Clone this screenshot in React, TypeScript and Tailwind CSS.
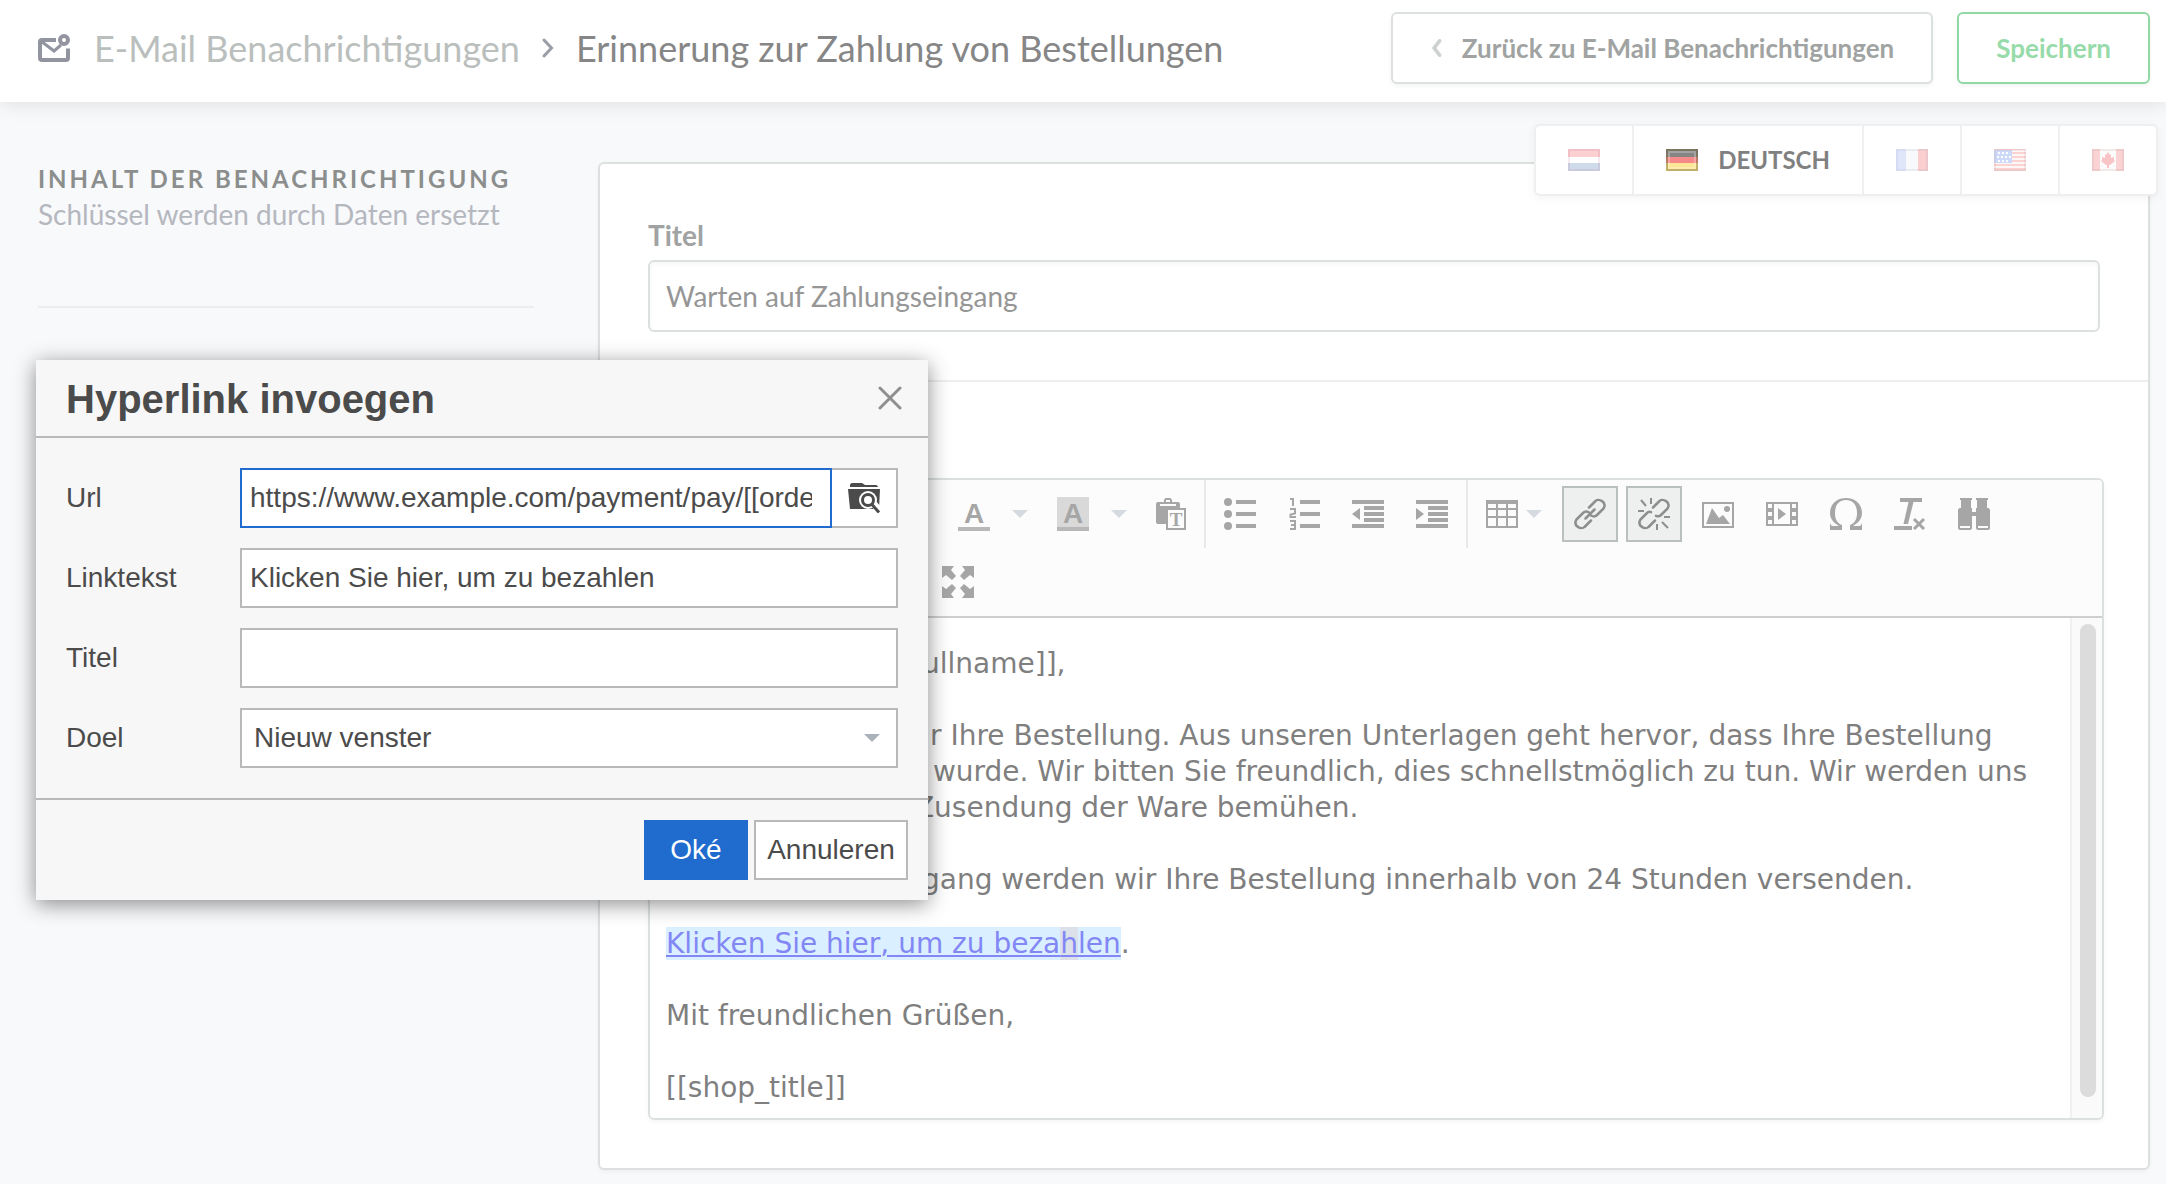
import React from "react";

type Children = { children?: React.ReactNode };

function Glyph({ children }: Children) {
  return (
    <svg viewBox="0 0 32 32" className="h-8 w-8 shrink-0" fill="currentColor" aria-hidden="true">
      {children}
    </svg>
  );
}

function Caret() {
  return (
    <svg viewBox="0 0 16 8" className="h-2 w-4 shrink-0 text-[#d5d9e0]" fill="currentColor" aria-hidden="true">
      <path d="M0 0h16L8 8z" />
    </svg>
  );
}

function ToolButton({ label, active, children }: Children & { label: string; active?: boolean }) {
  return (
    <button
      type="button"
      aria-label={label}
      className={
        active
          ? "flex h-14 w-14 items-center justify-center border-2 border-[#bac0bf] bg-[#edf0ef] text-[#8e8e8e]"
          : "flex h-14 w-14 items-center justify-center"
      }
    >
      {children}
    </button>
  );
}

function ColorButton({ label, filled }: { label: string; filled?: boolean }) {
  return (
    <button type="button" aria-label={label} className="flex h-14 w-[91px] items-center gap-[22px] pl-3">
      <svg viewBox="0 0 32 34" className="h-[34px] w-8 shrink-0" fill="currentColor" aria-hidden="true">
        {filled && <rect width="32" height="34" fill="#d9d9d9" />}
        <rect y="30" width="32" height="4" fill="#b8b8b8" />
        <text x="16" y="26" textAnchor="middle" fontSize="28" fontWeight="700" fontFamily="Liberation Sans, sans-serif">
          A
        </text>
      </svg>
      <Caret />
    </button>
  );
}

function Toolbar() {
  return (
    <div className="border-b-2 border-[#cfcfcf] bg-[#fcfcfc] text-[#a6a6a6]">
      <div className="flex h-[68px] pl-[296px]">
        <div className="flex items-center gap-2 border-r-2 border-[#e8e8e8] pr-1">
          <ColorButton label="Tekstkleur" />
          <ColorButton label="Achtergrondkleur" filled />
          <ToolButton label="Plakken als tekst">
            <Glyph>
              <path d="M2 4h6V2.500C8 1 9 0 10.500 0h3C15 0 16 1 16 2.500V4h6a2 2 0 0 1 2 2v4H10v16H2a2 2 0 0 1-2-2V6a2 2 0 0 1 2-2z" />
              <path d="M4 6h16v2H4z" fill="#fcfcfc" />
              <path d="M10 2h4v2h-4z" fill="#fcfcfc" />
              <path d="M11 11h18v20H11z" fill="#fcfcfc" stroke="currentColor" strokeWidth="2" />
              <text x="20" y="28" textAnchor="middle" fontSize="19" fontWeight="700" fontFamily="Liberation Serif, serif">
                T
              </text>
            </Glyph>
          </ToolButton>
        </div>
        <div className="flex items-center gap-2 border-r-2 border-[#e8e8e8] px-[6px]">
          <ToolButton label="Opsomming">
            <Glyph>
              <circle cx="4" cy="4" r="4" />
              <circle cx="4" cy="16" r="4" />
              <circle cx="4" cy="28" r="4" />
              <path d="M12 2h20v4H12zM12 14h20v4H12zM12 26h20v4H12z" />
            </Glyph>
          </ToolButton>
          <ToolButton label="Genummerde lijst">
            <Glyph>
              <path d="M12 2h20v4H12zM12 14h20v4H12zM12 26h20v4H12z" />
              <path
                d="M2 1h3v7M2 11h5v4.500l-4.500 1V19H8M2 23h5v8H2M3 27h4"
                fill="none"
                stroke="currentColor"
                strokeWidth="2"
              />
            </Glyph>
          </ToolButton>
          <ToolButton label="Inspringing verkleinen">
            <Glyph>
              <path d="M0 2h32v4H0zM12 8h20v4H12zM12 14h20v4H12zM12 20h20v4H12zM0 26h32v4H0zM8 10v12l-8-6z" />
            </Glyph>
          </ToolButton>
          <ToolButton label="Inspringing vergroten">
            <Glyph>
              <path d="M0 2h32v4H0zM12 8h20v4H12zM12 14h20v4H12zM12 20h20v4H12zM0 26h32v4H0zM0 10v12l8-6z" />
            </Glyph>
          </ToolButton>
        </div>
        <div className="flex items-center gap-2 pl-[6px]">
          <button type="button" aria-label="Tabel" className="flex h-14 w-20 items-center gap-2 pl-3">
            <Glyph>
              <path
                fillRule="evenodd"
                d="M0 2h32v28H0zM2 6v4h8V6zM12 6v4h8V6zM22 6v4h8V6zM2 12v6h8v-6zM12 12v6h8v-6zM22 12v6h8v-6zM2 20v8h8v-8zM12 20v8h8v-8zM22 20v8h8v-8z"
              />
            </Glyph>
            <Caret />
          </button>
          <ToolButton label="Link invoegen" active>
            <Glyph>
              <g fill="none" stroke="currentColor" strokeWidth="2.500" strokeLinecap="round" strokeLinejoin="round">
                <path d="M15 9.500l6.500-6.500c3-3.200 12 1 8 7.500l-6.500 6.500c-1.500 1.500-4 1.700-6 .5" />
                <path d="M17 22.500l-6.500 6.500c-3 3.200-12-1-8-7.500L9 15c1.500-1.500 4-1.700 6-.5" />
                <path d="M11.500 20.500l9-9" />
              </g>
            </Glyph>
          </ToolButton>
          <ToolButton label="Link verwijderen" active>
            <Glyph>
              <g fill="none" stroke="currentColor" strokeWidth="2.500" strokeLinecap="round" strokeLinejoin="round">
                <path d="M15 9.500l6.500-6.500c3-3.200 12 1 8 7.500l-6.500 6.500c-1.500 1.500-3 1.700-5 .8" />
                <path d="M17 22.500l-6.500 6.500c-3 3.200-12-1-8-7.500L9 15c1.500-1.500 2-1.700 4-.8" />
              </g>
              <path
                d="M3 2l5 6M13 0v6M0 13h6M26 19h6M19 26v6M24 24l6 6"
                fill="none"
                stroke="currentColor"
                strokeWidth="2"
              />
            </Glyph>
          </ToolButton>
          <ToolButton label="Afbeelding">
            <Glyph>
              <path fillRule="evenodd" d="M0 4h32v26H0zM2 6v22h28V6z" />
              <path d="M4 26l6-16 7 10 4-3 7 9z" />
              <circle cx="25" cy="11" r="3" />
            </Glyph>
          </ToolButton>
          <ToolButton label="Video">
            <Glyph>
              <path
                fillRule="evenodd"
                d="M0 4h32v24H0zM8 6v20h16V6zM2 6v4h4V6zM2 14v4h4v-4zM2 22v4h4v-4zM26 6v4h4V6zM26 14v4h4v-4zM26 22v4h4v-4z"
              />
              <path d="M12 10l8 6-8 6z" />
            </Glyph>
          </ToolButton>
          <ToolButton label="Speciaal teken">
            <Glyph>
              <path d="M0 25c1 2 1 3 3 3h6c-5-3-9-7-9-13C0 6 7 0 16 0s16 6 16 15c0 6-4 10-9 13h6c2 0 2-1 3-3v7H20v-5c5-2 7-6 7-12 0-8-4-13-11-13S5 7 5 15c0 6 2 10 7 12v5H0z" />
            </Glyph>
          </ToolButton>
          <ToolButton label="Opmaak verwijderen">
            <Glyph>
              <path d="M6 0h22v4H19.500L14 26h-4.500L14.500 4H6zM0 28h18v4H0z" />
              <path d="M20 21l10 10M30 21L20 31" stroke="currentColor" strokeWidth="3" />
            </Glyph>
          </ToolButton>
          <ToolButton label="Zoeken">
            <Glyph>
              <path
                fillRule="evenodd"
                d="M2 0h12v2h-1v8h1v4h4v-4h1V2h-1V0h12v2h-1v8h1c1 0 2 1 2 2v18c0 1-1 2-2 2H20c-1 0-2-1-2-2V18h-4v12c0 1-1 2-2 2H2c-1 0-2-1-2-2V12c0-1 1-2 2-2h1V2H2zM2 28v2h10v-2zM20 28v2h10v-2z"
              />
            </Glyph>
          </ToolButton>
        </div>
      </div>
      <div className="flex h-[68px] items-center pl-[280px]">
        <ToolButton label="Maximaliseren">
          <Glyph>
            <path d="M0 0h12L9 4l5 6-4 4-6-5-4 3zM32 0H20l3 4-5 6 4 4 6-5 4 3zM0 32h12l-3-4 5-6-4-4-6 5-4-3zM32 32H20l3-4-5-6 4-4 6 5 4-3z" />
          </Glyph>
        </ToolButton>
      </div>
    </div>
  );
}

function Editor() {
  return (
    <div className="overflow-hidden rounded-md border-2 border-[#dce1e0] bg-white shadow-[0_2px_4px_rgba(0,0,0,0.04)]">
      <Toolbar />
      <div className="flex h-[500px]">
        <div className="min-w-0 flex-1 overflow-hidden pt-7 pl-4 font-['Verdana','DejaVu_Sans',sans-serif] text-[28px] leading-9 whitespace-nowrap text-[#7f7f7f]">
          <p className="mb-9">
            <span className="inline-block w-[256px] text-right">Hallo [[f</span>ullname]],
          </p>
          <p className="mb-9">
            <span className="inline-block w-[264px] text-right">Vielen Dank fü</span>r Ihre Bestellung. Aus unseren
            Unterlagen geht hervor, dass Ihre Bestellung
            <br />
            <span className="inline-block w-[258px] text-right">nicht bezahlt</span> wurde. Wir bitten Sie freundlich,
            dies schnellstmöglich zu tun. Wir werden uns
            <br />
            <span className="inline-block w-[240px] text-right">dann um die</span> Zusendung der Ware bemühen.
          </p>
          <p className="mb-7">
            <span className="inline-block w-[256px] text-right">Zahlungsein</span>gang werden wir Ihre Bestellung
            innerhalb von 24 Stunden versenden.
          </p>
          <p className="mb-9">
            <a href="#bezahlen" className="bg-[#daefff] text-[#8287f5] underline decoration-2 underline-offset-2">
              Klicken Sie hier, um zu beza<span className="bg-[#dbe0ea]">h</span>len
            </a>
            .
          </p>
          <p className="mb-9">Mit freundlichen Grüßen,</p>
          <p>[[shop_title]]</p>
        </div>
        <div className="w-8 shrink-0 border-l-2 border-[#f0f0f0] bg-[#fafafa] pt-[6px] pl-2">
          <div className="h-[473px] w-4 rounded-full bg-[#dcdcdc]" />
        </div>
      </div>
    </div>
  );
}

function Flag({ name }: { name: "nl" | "de" | "fr" | "us" | "ca" }) {
  return (
    <svg viewBox="0 0 32 22" className="h-[22px] w-8 shrink-0" aria-hidden="true">
      {name === "nl" && (
        <>
          <path fill="#fccfd0" d="M0 0h32v8H0z" />
          <path fill="#fff" d="M0 8h32v6H0z" />
          <path fill="#cfdaea" d="M0 14h32v8H0z" />
          <path fill="none" stroke="#b06a90" strokeOpacity=".14" strokeWidth="2" d="M1 1h30v20H1z" />
        </>
      )}
      {name === "de" && (
        <>
          <path fill="#858585" d="M0 0h32v8H0z" />
          <path fill="#f58a88" d="M0 8h32v6H0z" />
          <path fill="#fbe795" d="M0 14h32v8H0z" />
          <path fill="none" stroke="#6b5a28" strokeOpacity=".4" strokeWidth="2" d="M1 1h30v20H1z" />
          <path fill="none" stroke="#fff" strokeOpacity=".25" strokeWidth="2" d="M3 3h26v16H3z" />
        </>
      )}
      {name === "fr" && (
        <>
          <path fill="#dfe6fa" d="M0 0h10v22H0z" />
          <path fill="#f8f9fb" d="M10 0h12v22H10z" />
          <path fill="#fbcfcf" d="M22 0h10v22H22z" />
          <path fill="none" stroke="#8a8ac0" strokeOpacity=".12" strokeWidth="2" d="M1 1h30v20H1z" />
        </>
      )}
      {name === "us" && (
        <>
          <path fill="#fdf7f7" d="M0 0h32v22H0z" />
          <path fill="#fbd3d3" d="M18 3h14v2H18zM18 7h14v2H18zM18 11h14v2H18zM0 15h32v2H0zM0 19h32v3H0zM0 0h32v1H0z" />
          <path fill="#cdd9fa" d="M0 1h18v13H0z" />
          <path stroke="#fff" strokeWidth="2" strokeDasharray="2 2" d="M4 4h12M3 8h14M4 12h12" />
          <path fill="none" stroke="#b08a80" strokeOpacity=".14" strokeWidth="2" d="M1 1h30v20H1z" />
        </>
      )}
      {name === "ca" && (
        <>
          <path fill="#fbfbfb" d="M0 0h32v22H0z" />
          <path fill="#fad3d4" d="M0 0h8v22H0zM24 0h8v22h-8z" />
          <path fill="#f9c4c6" d="M16 3l2 3 1-1v4l3-1v3l1 1-5 4h-1v3h-2v-3h-1l-5-4 1-1V8l3 1V5l1 1z" />
          <path fill="none" stroke="#c08080" strokeOpacity=".14" strokeWidth="2" d="M1 1h30v20H1z" />
        </>
      )}
    </svg>
  );
}

function LanguageTabs() {
  return (
    <nav
      aria-label="Sprache"
      className="absolute -top-[40px] -right-[10px] z-10 flex h-[72px] divide-x-2 divide-[#efefef] rounded-md border-2 border-[#efefef] bg-white shadow-[0_2px_10px_rgba(0,0,0,0.05)]"
    >
      <button type="button" aria-label="Nederlands" className="flex items-center px-8">
        <Flag name="nl" />
      </button>
      <button type="button" className="flex items-center gap-5 px-8 text-2xl font-bold text-[#808080]">
        <Flag name="de" />
        DEUTSCH
      </button>
      <button type="button" aria-label="Français" className="flex items-center px-8">
        <Flag name="fr" />
      </button>
      <button type="button" aria-label="English" className="flex items-center px-8">
        <Flag name="us" />
      </button>
      <button type="button" aria-label="Canada" className="flex items-center px-8">
        <Flag name="ca" />
      </button>
    </nav>
  );
}

function Header() {
  return (
    <header className="relative flex h-[102px] items-center bg-white pr-4 pb-[6px] pl-[38px] shadow-[0_0_20px_rgba(0,0,0,0.13)]">
      <svg viewBox="0 0 32 28" className="h-7 w-8 shrink-0 text-[#9294a0]" fill="none" stroke="currentColor" aria-hidden="true">
        <path
          d="M18 6H4a2 2 0 0 0-2 2v16a2 2 0 0 0 2 2h24a2 2 0 0 0 2-2V14.500"
          strokeWidth="4"
          strokeLinejoin="round"
        />
        <path d="M3.500 7.500L16 17l7-6" strokeWidth="3" />
        <circle cx="26" cy="6" r="4" strokeWidth="4" />
      </svg>
      <h1 className="ml-6 flex items-center text-4xl whitespace-nowrap">
        <a href="#benachrichtigungen" className="text-[#babfbd]">
          E-Mail Benachrichtigungen
        </a>
        <svg viewBox="0 0 12 20" className="mx-[22px] h-5 w-3" fill="none" stroke="#9a9ca8" strokeWidth="3" strokeLinecap="round" aria-hidden="true">
          <path d="M2 2l7.500 8L2 18" />
        </svg>
        <span className="text-[#868686]">Erinnerung zur Zahlung von Bestellungen</span>
      </h1>
      <div className="ml-auto flex gap-6 text-[26px] font-bold">
        <button
          type="button"
          className="flex h-[72px] items-center gap-5 rounded-md border-2 border-[#dce1e0] bg-white px-[37px] text-[#a0a3a2] shadow-[0_2px_4px_rgba(0,0,0,0.05)]"
        >
          <svg viewBox="0 0 12 20" className="h-[18px] w-3" fill="none" stroke="#cdd2d1" strokeWidth="4" strokeLinecap="round" aria-hidden="true">
            <path d="M10 2L4 10l6 8" />
          </svg>
          Zurück zu E-Mail Benachrichtigungen
        </button>
        <button
          type="button"
          className="h-[72px] rounded-md border-2 border-[#90d8a4] bg-white px-[37px] text-[#97dbaa] shadow-[0_2px_4px_rgba(0,0,0,0.05)]"
        >
          Speichern
        </button>
      </div>
    </header>
  );
}

function Row({ label, id, children }: Children & { label: string; id: string }) {
  return (
    <div className="flex items-center">
      <label htmlFor={id} className="w-[174px] shrink-0">
        {label}
      </label>
      <div className="flex h-[60px] min-w-0 flex-1">{children}</div>
    </div>
  );
}

function LinkDialog() {
  return (
    <section
      role="dialog"
      aria-labelledby="dialog-title"
      className="absolute top-[360px] left-9 z-20 w-[892px] bg-[#f7f7f7] font-['Liberation_Sans',sans-serif] text-[28px] text-[#4b4b4b] shadow-[0_4px_20px_rgba(0,0,0,0.45)]"
    >
      <div className="flex h-[78px] items-center justify-between border-b-2 border-[#b9b9b9] pr-[26px] pl-[30px]">
        <h2 id="dialog-title" className="pt-[2px] text-[40px] font-bold">
          Hyperlink invoegen
        </h2>
        <button type="button" aria-label="Sluiten">
          <svg viewBox="0 0 24 24" className="h-6 w-6" stroke="#8f8f8f" strokeWidth="3" strokeLinecap="round" aria-hidden="true">
            <path d="M2 2l20 20M22 2L2 22" />
          </svg>
        </button>
      </div>
      <div className="flex flex-col gap-5 px-[30px] py-[30px]">
        <Row label="Url" id="url">
          <input
            id="url"
            type="text"
            defaultValue="https://www.example.com/payment/pay/[[order]]"
            className="min-w-0 flex-1 border-2 border-[#206bce] bg-white pr-[18px] pl-2 outline-none"
          />
          <button
            type="button"
            aria-label="Bladeren"
            className="flex w-[66px] shrink-0 items-center justify-center border-y-2 border-r-2 border-[#b9b9b9] bg-white"
          >
            <svg viewBox="0 0 32 30" className="h-[30px] w-8" fill="currentColor" aria-hidden="true">
              <path d="M2 4V2c0-1 1-2 2-2h10l3 2h11c1 0 2 1 2 2z" />
              <path d="M0 6h32l-1 20H2z" />
              <path d="M25.500 20.500l6 7" stroke="#fff" strokeWidth="7" />
              <circle cx="20" cy="17" r="9" fill="#fff" />
              <circle cx="20" cy="17" r="5.500" fill="none" stroke="currentColor" strokeWidth="3" />
              <path d="M24 21.500l7 8" stroke="currentColor" strokeWidth="3" />
            </svg>
          </button>
        </Row>
        <Row label="Linktekst" id="linktekst">
          <input
            id="linktekst"
            type="text"
            defaultValue="Klicken Sie hier, um zu bezahlen"
            className="min-w-0 flex-1 border-2 border-[#b9b9b9] bg-white px-2"
          />
        </Row>
        <Row label="Titel" id="link-titel">
          <input id="link-titel" type="text" className="min-w-0 flex-1 border-2 border-[#b9b9b9] bg-white px-2" />
        </Row>
        <Row label="Doel" id="doel">
          <div className="relative flex flex-1">
            <select id="doel" className="flex-1 appearance-none border-2 border-[#b9b9b9] bg-white px-3">
              <option>Nieuw venster</option>
            </select>
            <svg viewBox="0 0 16 8" className="pointer-events-none absolute top-[26px] right-[18px] h-2 w-4" fill="#aab1bb" aria-hidden="true">
              <path d="M0 0h16L8 8z" />
            </svg>
          </div>
        </Row>
      </div>
      <div className="flex justify-end gap-[6px] border-t-2 border-[#b9b9b9] p-5">
        <button type="button" className="h-[60px] w-[104px] bg-[#206bce] text-white">
          Oké
        </button>
        <button type="button" className="h-[60px] w-[154px] border-2 border-[#b9b9b9] bg-white">
          Annuleren
        </button>
      </div>
    </section>
  );
}

export default function App() {
  return (
    <div className="relative min-h-screen bg-[#f8f9fb] font-['Lato',sans-serif]">
      <Header />
      <main className="flex gap-16 pt-[60px] pr-4 pb-[14px] pl-[38px]">
        <aside className="w-[496px] shrink-0">
          <div className="h-[146px] border-b-2 border-[#ededf0]">
            <h2 className="text-2xl leading-[34px] font-bold tracking-[3px] whitespace-nowrap text-[#8b8e8c] uppercase">
              Inhalt der Benachrichtigung
            </h2>
            <p className="text-[28px] leading-9 whitespace-nowrap text-[#b5b7bf]">Schlüssel werden durch Daten ersetzt</p>
          </div>
        </aside>
        <div className="relative min-w-0 flex-1 rounded-md border-2 border-[#dce1e0] bg-white shadow-[0_2px_4px_rgba(0,0,0,0.04)]">
          <LanguageTabs />
          <div className="flex flex-col gap-2 border-b-2 border-[#eeeeee] pt-[54px] pr-12 pb-12 pl-12">
            <label htmlFor="titel" className="text-[28px] leading-[34px] font-bold text-[#a0a3a2]">
              Titel
            </label>
            <input
              id="titel"
              type="text"
              defaultValue="Warten auf Zahlungseingang"
              className="h-[72px] rounded-md border-2 border-[#dce1e0] bg-white px-4 text-[28px] text-[#969696] shadow-[inset_0_2px_4px_rgba(0,0,0,0.04)]"
            />
          </div>
          <div className="pt-24 pr-11 pb-12 pl-12">
            <Editor />
          </div>
        </div>
      </main>
      <LinkDialog />
    </div>
  );
}
